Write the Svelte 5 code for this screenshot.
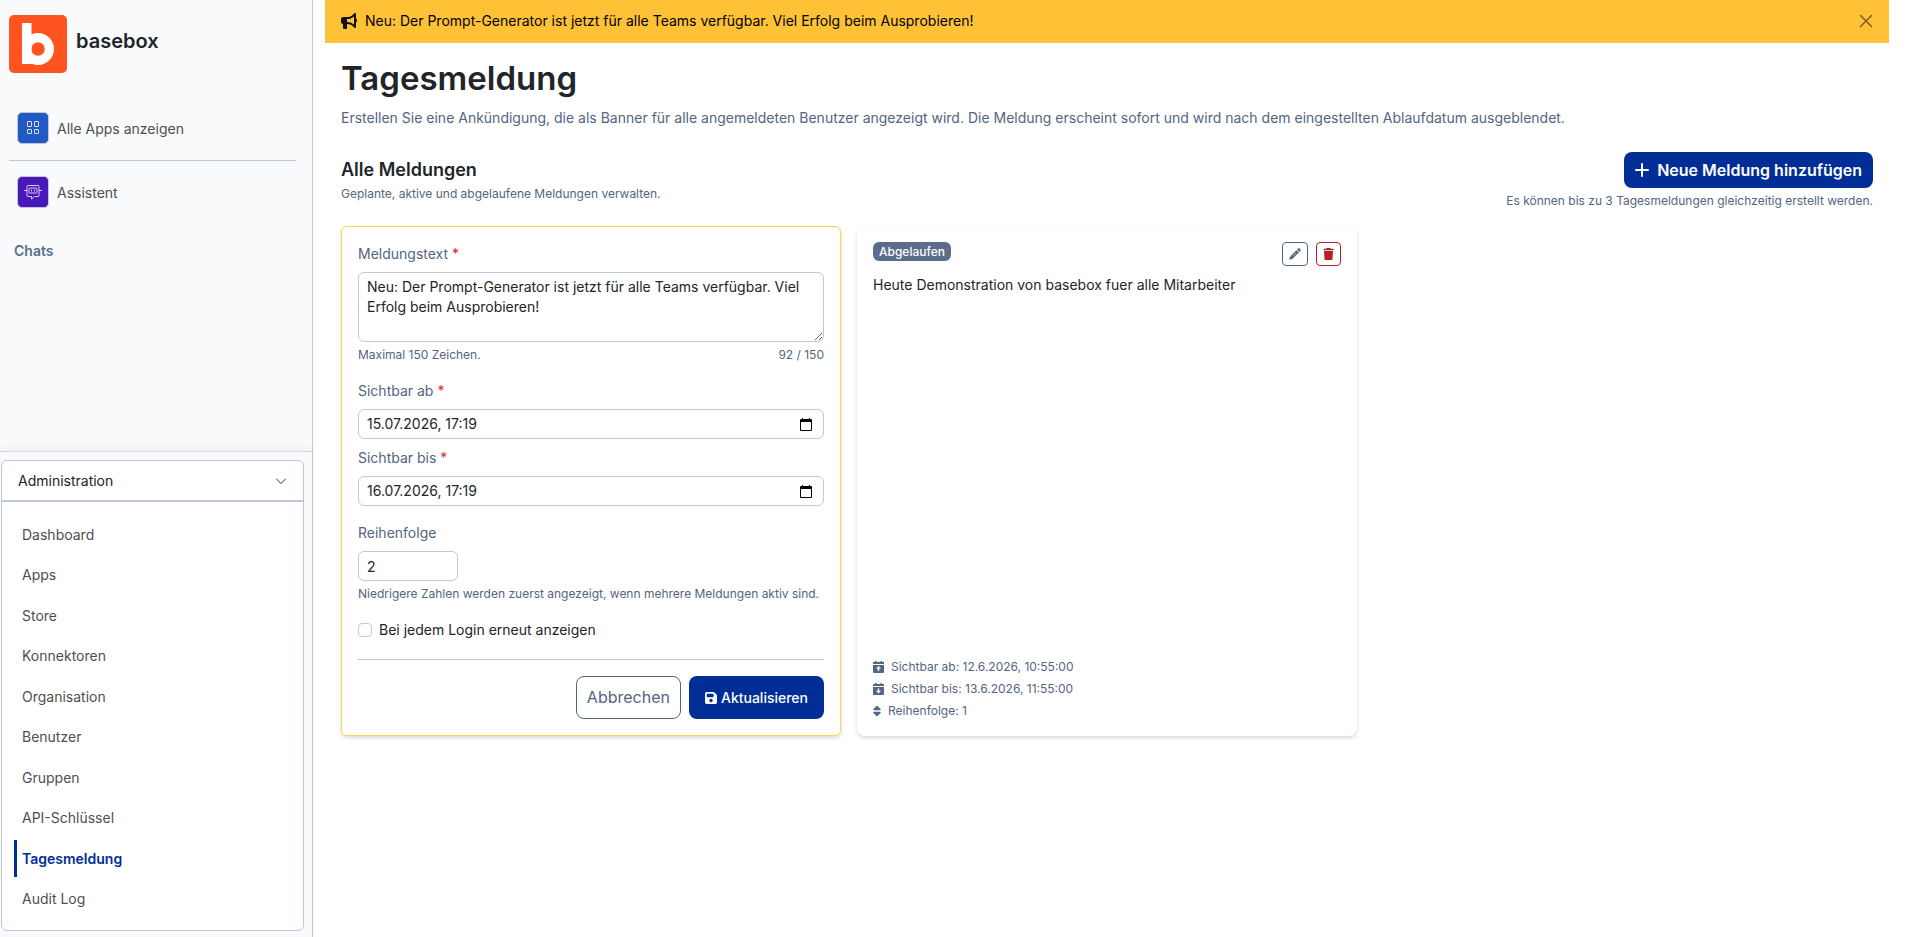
<script lang="ts">
  const maxLength = 150;

  const adminLinks = [
    'Dashboard',
    'Apps',
    'Store',
    'Konnektoren',
    'Organisation',
    'Benutzer',
    'Gruppen',
    'API-Schlüssel',
    'Tagesmeldung',
    'Audit Log'
  ];

  let activeLink = $state('Tagesmeldung');
  let adminOpen = $state(true);
  let showBanner = $state(true);

  let message = $state(
    'Neu: Der Prompt-Generator ist jetzt für alle Teams verfügbar. Viel Erfolg beim Ausprobieren!'
  );
  let visibleFrom = $state('15.07.2026, 17:19');
  let visibleUntil = $state('16.07.2026, 17:19');
  let order = $state('2');
  let repeatOnLogin = $state(false);
</script>

{#snippet calendarIcon()}
  <svg width="12" height="13" viewBox="0 0 12 13" aria-hidden="true">
    <path d="M2 0h1v1h6V0h1v1h1a1 1 0 0 1 1 1v10a1 1 0 0 1-1 1H1a1 1 0 0 1-1-1V2a1 1 0 0 1 1-1h1zM1 4v8h10V4z" fill="#000" fill-rule="evenodd" />
  </svg>
{/snippet}

<div class="layout">
  <aside class="sidebar">
    <div class="sidebar-top">
      <a class="brand" href="#home">
        <svg width="58" height="58" viewBox="0 0 58 58" aria-hidden="true">
          <rect width="58" height="58" rx="5" fill="#ff5420" />
          <rect x="13" y="8" width="9.500" height="41" fill="#fff" />
          <circle cx="29" cy="34" r="11.400" fill="none" stroke="#fff" stroke-width="9.200" />
        </svg>
        <span>basebox</span>
      </a>
      <nav class="apps">
        <a href="#apps">
          <span class="app-icon blue">
            <svg width="14" height="14" viewBox="0 0 14 14" fill="none" stroke="#dbe6fb" aria-hidden="true">
              <rect x="1.500" y="0.500" width="4" height="5" rx="0.500" />
              <rect x="8.500" y="0.500" width="4" height="5" rx="0.500" />
              <rect x="1.500" y="8.500" width="4" height="4" rx="0.500" />
              <rect x="8.500" y="8.500" width="4" height="4" rx="0.500" />
            </svg>
          </span>
          Alle Apps anzeigen
        </a>
        <hr />
        <a href="#assistent">
          <span class="app-icon purple">
            <svg width="18" height="16" viewBox="0 0 18 16" fill="none" stroke="#d9c9fa" aria-hidden="true">
              <path d="M4 1.500h10a1 1 0 0 1 1 1v9a1 1 0 0 1-1 1h-3.500L7.500 15v-2.500H4a1 1 0 0 1-1-1v-9a1 1 0 0 1 1-1z" />
              <rect x="5" y="4" width="8" height="5" rx="1" />
              <path d="M0 6.500h3M15 6.500h3M7.500 5.500v2M10.500 5.500v2" />
            </svg>
          </span>
          Assistent
        </a>
      </nav>
      <h2 class="chats">Chats</h2>
    </div>

    <div class="sidebar-bottom">
      <div class="admin">
        <button class="admin-toggle" type="button" aria-expanded={adminOpen} onclick={() => (adminOpen = !adminOpen)}>
          Administration
          <svg width="12" height="12" viewBox="0 0 12 12" fill="none" stroke="#333" stroke-linecap="round" stroke-linejoin="round" aria-hidden="true">
            <path d="M1.500 4 6 8.500 10.500 4" />
          </svg>
        </button>
        {#if adminOpen}
          <ul>
            {#each adminLinks as link}
              <li>
                <a href="#{link}" class:active={link === activeLink} onclick={() => (activeLink = link)}>{link}</a>
              </li>
            {/each}
          </ul>
        {/if}
      </div>
    </div>
  </aside>

  <main>
    {#if showBanner}
      <div class="banner" role="status">
        <svg width="16" height="16" viewBox="0 0 512 512" fill="#111" aria-hidden="true">
          <path d="M480 32c0-12.9-7.8-24.6-19.8-29.6s-25.7-2.2-34.9 6.9L381.7 53c-48 48-113.1 75-181 75H64c-35.3 0-64 28.7-64 64v96c0 35.3 28.7 64 64 64v128c0 17.7 14.3 32 32 32h64c17.700 0 32-14.300 32-32V352h8.700c67.900 0 133 27 181 75l43.600 43.600c9.200 9.200 22.900 11.900 34.900 6.900s19.800-16.600 19.800-29.600V300.400c18.600-8.800 32-32.500 32-60.400s-13.400-51.600-32-60.400V32zm-64 76.700v262.600C357.200 317.800 280.500 288 200.700 288H192v-96h8.700c79.800 0 156.500-29.800 215.300-83.300z" />
        </svg>
        <span>{message}</span>
        <button type="button" aria-label="Schließen" onclick={() => (showBanner = false)}>
          <svg width="14" height="14" viewBox="0 0 14 14" stroke="#7d6021" stroke-width="1.500" stroke-linecap="round" aria-hidden="true">
            <path d="M1.500 1.500l11 11M12.500 1.500l-11 11" />
          </svg>
        </button>
      </div>
    {/if}

    <div class="content">
      <h1>Tagesmeldung</h1>
      <p class="intro">
        Erstellen Sie eine Ankündigung, die als Banner für alle angemeldeten Benutzer angezeigt wird. Die Meldung erscheint sofort und wird nach dem eingestellten Ablaufdatum ausgeblendet.
      </p>

      <div class="section-head">
        <div>
          <h2>Alle Meldungen</h2>
          <p class="hint">Geplante, aktive und abgelaufene Meldungen verwalten.</p>
        </div>
        <div class="section-action">
          <button class="btn-add" type="button">
            <svg width="14" height="14" viewBox="0 0 14 14" stroke="#fff" stroke-width="2" stroke-linecap="round" aria-hidden="true">
              <path d="M7 1v12M1 7h12" />
            </svg>
            Neue Meldung hinzufügen
          </button>
          <p class="hint">Es können bis zu 3 Tagesmeldungen gleichzeitig erstellt werden.</p>
        </div>
      </div>

      <div class="cards">
        <form class="card editing" onsubmit={(e) => e.preventDefault()}>
          <div class="field">
            <label for="message">Meldungstext <span class="required">*</span></label>
            <textarea id="message" maxlength={maxLength} bind:value={message}></textarea>
            <div class="hint-row">
              <span>Maximal {maxLength} Zeichen.</span>
              <span>{message.length} / {maxLength}</span>
            </div>
          </div>
          <div class="dates">
            <div class="field">
              <label for="from">Sichtbar ab <span class="required">*</span></label>
              <div class="date-input">
                <input id="from" type="text" bind:value={visibleFrom} />
                <button type="button" aria-label="Datum wählen">{@render calendarIcon()}</button>
              </div>
            </div>
            <div class="field">
              <label for="until">Sichtbar bis <span class="required">*</span></label>
              <div class="date-input">
                <input id="until" type="text" bind:value={visibleUntil} />
                <button type="button" aria-label="Datum wählen">{@render calendarIcon()}</button>
              </div>
            </div>
          </div>
          <div class="field">
            <label for="order">Reihenfolge</label>
            <input id="order" class="order" type="text" inputmode="numeric" bind:value={order} />
            <p class="hint">Niedrigere Zahlen werden zuerst angezeigt, wenn mehrere Meldungen aktiv sind.</p>
          </div>
          <div class="check">
            <input id="repeat" type="checkbox" bind:checked={repeatOnLogin} />
            <label for="repeat">Bei jedem Login erneut anzeigen</label>
          </div>
          <div class="form-actions">
            <button class="btn-cancel" type="button">Abbrechen</button>
            <button class="btn-save" type="submit">
              <svg width="12" height="14" viewBox="0 0 448 512" fill="#fff" aria-hidden="true">
                <path d="M64 32C28.700 32 0 60.700 0 96v320c0 35.300 28.700 64 64 64h320c35.300 0 64-28.700 64-64V173.300c0-17-6.700-33.300-18.700-45.300L352 50.700C340 38.700 323.700 32 306.700 32H64zm0 96c0-17.700 14.300-32 32-32h192c17.700 0 32 14.300 32 32v64c0 17.700-14.300 32-32 32H96c-17.700 0-32-14.300-32-32v-64zm160 160a64 64 0 1 1 0 128 64 64 0 1 1 0-128z" />
              </svg>
              Aktualisieren
            </button>
          </div>
        </form>

        <article class="card">
          <div class="card-head">
            <span class="badge">Abgelaufen</span>
            <div class="card-buttons">
              <button type="button" class="edit" aria-label="Bearbeiten">
                <svg width="12" height="12" viewBox="0 0 12 12" aria-hidden="true">
                  <path d="M7.600 2.200l2.200 2.200-6.300 6.300-3.100.9.900-3.100zM8.200 1.600l1-1a1 1 0 0 1 1.400 0l.8.800a1 1 0 0 1 0 1.400l-1 1z" fill="#53657f" stroke="#53657f" stroke-width="0.300" />
                  <path d="M4.200 7.800l2.800-2.800" stroke="#fff" stroke-width="0.500" />
                </svg>
              </button>
              <button type="button" class="delete" aria-label="Löschen">
                <svg width="11" height="12" viewBox="0 0 448 512" fill="#b32025" aria-hidden="true">
                  <path d="M135.200 17.700L128 32H32C14.300 32 0 46.300 0 64s14.300 32 32 32h384c17.700 0 32-14.300 32-32s-14.300-32-32-32h-96l-7.200-14.300C307.400 6.800 296.300 0 284.200 0H163.800c-12.100 0-23.200 6.800-28.600 17.700zM416 128H32l21.200 339c1.600 25.300 22.600 45 47.900 45h245.800c25.300 0 46.300-19.700 47.900-45L416 128z" />
                </svg>
              </button>
            </div>
          </div>
          <p class="card-text">Heute Demonstration von basebox fuer alle Mitarbeiter</p>
          <ul class="meta">
            <li>
              <svg width="11" height="12" viewBox="0 0 11 12" aria-hidden="true">
                <path d="M2 0h1.500v1h4V0H9v1h2v2H0V1h2zM0 4h11v7a1 1 0 0 1-1 1H1a1 1 0 0 1-1-1z" fill="#53657f" />
                <path d="M5.500 5L8 7.800H6.200V10H4.800V7.800H3z" fill="#fff" />
              </svg>
              Sichtbar ab: 12.6.2026, 10:55:00
            </li>
            <li>
              <svg width="11" height="12" viewBox="0 0 11 12" aria-hidden="true">
                <path d="M2 0h1.500v1h4V0H9v1h2v2H0V1h2zM0 4h11v7a1 1 0 0 1-1 1H1a1 1 0 0 1-1-1z" fill="#53657f" />
                <path d="M5.500 10.500L3 7.700h1.800V5.500h1.400v2.200H8z" fill="#fff" />
              </svg>
              Sichtbar bis: 13.6.2026, 11:55:00
            </li>
            <li>
              <svg width="8" height="12" viewBox="0 0 320 512" fill="#53657f" aria-hidden="true">
                <path d="M137.400 41.400c12.500-12.500 32.800-12.500 45.300 0l128 128c9.200 9.200 11.900 22.900 6.900 34.900s-16.600 19.800-29.600 19.800H32c-12.900 0-24.600-7.800-29.600-19.800s-2.200-25.700 6.900-34.900zm0 429.300l-128-128c-9.200-9.200-11.900-22.900-6.900-34.900s16.600-19.800 29.600-19.800h256c12.900 0 24.600 7.800 29.600 19.800s2.200 25.700-6.900 34.900l-128 128c-12.500 12.500-32.800 12.500-45.300 0z" />
              </svg>
              Reihenfolge: 1
            </li>
          </ul>
        </article>
      </div>
    </div>
  </main>
</div>

<style>
  :global(body) {
    margin: 0;
    background: #fff;
  }
  .layout {
    display: flex;
    min-height: 100vh;
    font-family: Inter, 'Liberation Sans', sans-serif;
    font-size: 14px;
    line-height: 21px;
    color: #212529;
  }
  .layout *,
  .layout *::before {
    box-sizing: border-box;
  }
  h1,
  h2,
  p,
  ul {
    margin: 0;
    padding: 0;
  }
  ul {
    list-style: none;
  }
  a {
    color: inherit;
    text-decoration: none;
  }
  svg {
    display: block;
    flex: none;
  }
  button,
  input,
  textarea {
    font: inherit;
    color: inherit;
  }
  button {
    padding: 0;
    border: 0;
    background: none;
    cursor: pointer;
  }

  .sidebar {
    display: flex;
    flex-direction: column;
    flex: none;
    width: 313px;
    background: #f8fafc;
    border-right: 1px solid #bfc8d9;
  }
  .sidebar-top {
    flex: 1;
    padding: 15px 16px 0 9px;
  }
  .brand {
    display: flex;
    gap: 9px;
    font-size: 20px;
    line-height: 52px;
    font-weight: 600;
  }
  .apps {
    margin-top: 39px;
    color: #4f4f4f;
  }
  .apps a {
    display: flex;
    align-items: center;
    gap: 8px;
    padding: 0 8px;
  }
  .apps hr {
    margin: 16px 0 15px;
    border: 0;
    border-top: 1px solid #bfc8d9;
  }
  .app-icon {
    display: flex;
    align-items: center;
    justify-content: center;
    width: 32px;
    height: 32px;
    border: 1px solid #bfc8d9;
    border-radius: 5px;
  }
  .blue {
    background: #2259c3;
  }
  .purple {
    background: #4a17b8;
  }
  .chats {
    margin: 32px 0 0 5px;
    font-size: 14px;
    font-weight: 600;
    color: #5b6f8c;
  }
  .sidebar-bottom {
    display: flex;
    min-height: 486px;
    padding: 8px 8px 6px 1px;
    border-top: 1px solid #d3d8de;
    box-shadow: 0 -4px 8px rgba(0, 0, 0, 0.04);
  }
  .admin {
    display: flex;
    flex-direction: column;
    flex: 1;
    background: #fff;
    border: 1px solid #bfc8d9;
    border-radius: 6px;
  }
  .admin-toggle {
    display: flex;
    align-items: center;
    justify-content: space-between;
    height: 41px;
    padding: 0 16px;
    border-bottom: 2px solid #bfc8d9;
  }
  .admin ul {
    display: flex;
    flex-direction: column;
    justify-content: space-between;
    flex: 1;
    padding: 14px 12px 13px;
  }
  .admin li a {
    display: block;
    padding: 8px 5px;
    border-left: 3px solid transparent;
    color: #4f4f4f;
  }
  .admin li a.active {
    border-left-color: #002d96;
    color: #002d96;
    font-weight: 600;
  }

  main {
    flex: 1;
    min-width: 0;
    padding: 0 17px 0 12px;
  }
  .banner {
    display: flex;
    align-items: center;
    gap: 8px;
    height: 43px;
    padding: 0 16px 2px;
    background: #ffc136;
    color: #000;
  }
  .banner span {
    flex: 1;
  }
  .content {
    padding: 12px 16px;
  }
  h1 {
    font-size: 33px;
    line-height: 46px;
    font-weight: 600;
  }
  .intro {
    margin-top: 6px;
    color: #53657f;
  }
  .section-head {
    display: flex;
    align-items: center;
    justify-content: space-between;
    margin: 24px 0 16px;
  }
  .section-head h2 {
    font-size: 18px;
    line-height: 22px;
    font-weight: 600;
  }
  .section-head .hint {
    margin-top: 4px;
  }
  .section-action {
    display: flex;
    flex-direction: column;
    align-items: flex-end;
  }
  .hint,
  .hint-row {
    font-size: 12px;
    line-height: 18px;
    color: #53657f;
  }
  .hint-row {
    display: flex;
    justify-content: space-between;
  }
  .btn-add {
    display: flex;
    align-items: center;
    gap: 8px;
    height: 36px;
    padding: 0 11px;
    border-radius: 8px;
    background: #002d96;
    color: #fff;
    font-size: 16px;
    font-weight: 600;
  }

  .cards {
    display: grid;
    grid-template-columns: repeat(3, 1fr);
    gap: 16px;
  }
  .card {
    display: flex;
    flex-direction: column;
    padding: 16px 16px 14px;
    border-radius: 8px;
    background: #fff;
    box-shadow: 0 2px 4px rgba(0, 0, 0, 0.15);
  }
  .card.editing {
    gap: 16px;
    padding: 16px;
    border: 1px solid #ffd74a;
    border-radius: 6px;
  }
  .field {
    display: flex;
    flex-direction: column;
  }
  .field label {
    margin-bottom: 8px;
    color: #53657f;
  }
  .required {
    color: #e0252f;
  }
  .dates {
    display: flex;
    flex-direction: column;
    gap: 8px;
  }
  textarea,
  .date-input,
  .order {
    border: 1px solid #bfc8d9;
    border-radius: 6px;
    background: #fff;
  }
  textarea {
    display: block;
    height: 70px;
    padding: 4px 8px;
    line-height: 20px;
    resize: vertical;
  }
  .field .hint,
  .hint-row {
    margin-top: 4px;
  }
  .date-input {
    display: flex;
    align-items: center;
    height: 30px;
    padding: 0 11px 0 8px;
  }
  .date-input input {
    flex: 1;
    min-width: 0;
    height: 20px;
    padding: 0;
    border: 0;
    outline: 0;
    background: none;
    line-height: 20px;
  }
  .order {
    width: 100px;
    height: 30px;
    padding: 4px 8px;
    line-height: 20px;
  }
  .check {
    display: flex;
    gap: 7px;
    height: 24px;
  }
  .check input {
    appearance: none;
    width: 14px;
    height: 14px;
    margin: 4px 0 0;
    border: 1px solid #bfc8d9;
    border-radius: 4px;
    background: #fff;
  }
  .check input:checked {
    background: #002d96;
  }
  .form-actions {
    display: flex;
    justify-content: flex-end;
    gap: 8px;
    padding-top: 16px;
    border-top: 1px solid #c5cad0;
  }
  .form-actions button {
    height: 43px;
    border-radius: 8px;
  }
  .btn-cancel {
    padding: 0 10px;
    border: 1px solid #53657f;
    color: #53657f;
    font-size: 16px;
  }
  .btn-save {
    display: flex;
    align-items: center;
    gap: 4px;
    padding: 0 16px;
    background: #002d96;
    color: #fff;
    font-weight: 500;
  }

  .card-head {
    display: flex;
    align-items: flex-start;
    justify-content: space-between;
  }
  .badge {
    padding: 0 6px;
    border-radius: 6px;
    background: #5b6d8a;
    color: #fff;
    font-size: 12px;
    line-height: 19px;
    font-weight: 500;
  }
  .card-buttons {
    display: flex;
    gap: 8px;
  }
  .card-buttons button {
    display: flex;
    align-items: center;
    justify-content: center;
    height: 24px;
    padding: 0 6px;
    border: 1px solid #53657f;
    border-radius: 4px;
  }
  .card-buttons .delete {
    border-color: #b32025;
  }
  .card-text {
    flex: 1;
    margin-top: 8px;
  }
  .meta {
    font-size: 12px;
    line-height: 22px;
    color: #53657f;
  }
  .meta li {
    display: flex;
    align-items: center;
    gap: 7px;
  }
</style>
